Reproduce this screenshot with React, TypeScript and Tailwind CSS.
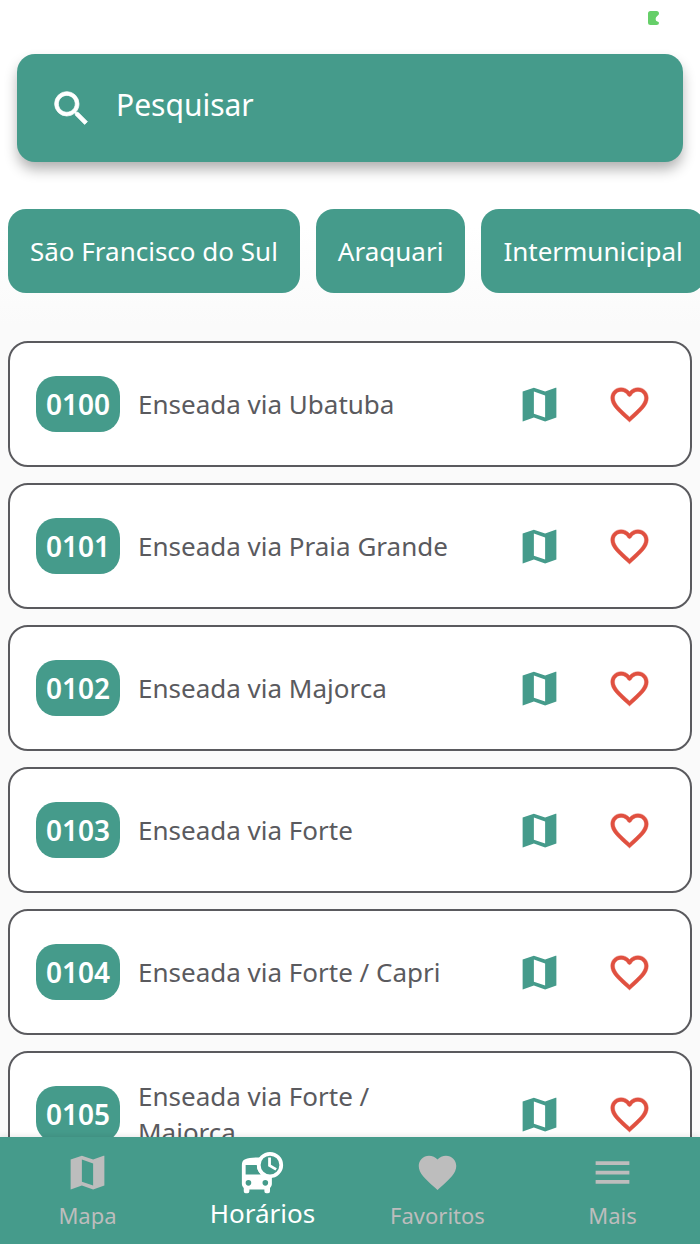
import clsx from 'clsx';
import React, { useState } from 'react';

interface IIconProps {
  className?: string;
}

interface IRoute {
  code: string;
  name: string;
}

interface ITab {
  label: string;
  Icon: React.FC<IIconProps>;
}

const MagnifyIcon: React.FC<IIconProps> = ({ className }) => (
  <svg
    viewBox="0 0 24 24"
    fill="currentColor"
    stroke="currentColor"
    strokeWidth="0.4"
    aria-hidden="true"
    className={className}
  >
    <path d="M9.5 3A6.5 6.5 0 0 1 16 9.5c0 1.61-.59 3.09-1.56 4.23l.27.27h.79l5 5-1.5 1.5-5-5v-.79l-.27-.27A6.52 6.52 0 0 1 9.5 16 6.5 6.5 0 0 1 9.5 3m0 2C7 5 5 7 5 9.5S7 14 9.5 14 14 12 14 9.5 12 5 9.5 5z" />
  </svg>
);

const MapIcon: React.FC<IIconProps> = ({ className }) => (
  <svg viewBox="0 0 24 24" fill="currentColor" aria-hidden="true" className={className}>
    <path
      fillRule="evenodd"
      d="M3 5.1 9 3l6 2.1L20.6 3.05 21 3v15.9L15 21l-6-2.1-5.6 2.05L3 21zM9 5.1v11.8l6 2.05V7.15z"
    />
  </svg>
);

const HeartOutlineIcon: React.FC<IIconProps> = ({ className }) => (
  <svg
    viewBox="0 0 24 24"
    fill="currentColor"
    stroke="currentColor"
    strokeWidth="0.2"
    aria-hidden="true"
    className={className}
  >
    <path
      fillRule="evenodd"
      d="M16.5 3c-1.74 0-3.41.81-4.5 2.08C10.91 3.81 9.24 3 7.5 3 4.42 3 2 5.41 2 8.5c0 3.77 3.4 6.86 8.55 11.53L12 21.35l1.45-1.32C18.6 15.36 22 12.27 22 8.5 22 5.41 19.58 3 16.5 3M12 18.65C7.14 14.24 4 11.39 4 8.5 4 6.5 5.5 5 7.5 5c1.54 0 3.04.9 3.6 2.3l.9.5.9-.5C13.46 5.9 14.96 5 16.5 5c2 0 3.5 1.5 3.5 3.5 0 2.89-3.14 5.74-8 10.15z"
    />
  </svg>
);

const HeartIcon: React.FC<IIconProps> = ({ className }) => (
  <svg viewBox="0 0 24 24" fill="currentColor" aria-hidden="true" className={className}>
    <path d="m12 21.35-1.45-1.32C5.4 15.36 2 12.27 2 8.5 2 5.41 4.42 3 7.5 3c1.74 0 3.41.81 4.5 2.08C13.09 3.81 14.76 3 16.5 3 19.58 3 22 5.41 22 8.5c0 3.77-3.4 6.86-8.55 11.53z" />
  </svg>
);

const BusClockIcon: React.FC<IIconProps> = ({ className }) => (
  <svg viewBox="0 0 24 24" fill="currentColor" aria-hidden="true" className={className}>
    <path
      fillRule="evenodd"
      d="M16 1a7 7 0 1 0 0 14 7 7 0 0 0 0-14m0 2a5 5 0 1 1 0 10 5 5 0 0 1 0-10"
    />
    <path d="M15 4v4.7l3.9 2.25.75-1.25-3.15-1.85V4z" />
    <path
      fillRule="evenodd"
      d="M11.1 4.5 10.6 4C4 4 1 4.5 1 8v10c0 .88.39 1.67 1 2.22V22a1 1 0 0 0 1 1h1a1 1 0 0 0 1-1v-1h8v1a1 1 0 0 0 1 1h1a1 1 0 0 0 1-1v-1.78c.61-.55 1-1.34 1-2.22v-4.08A6 6 0 0 1 11.1 4.5M3 8h6a7 7 0 0 0 2.1 5H3zM4.5 16a1.5 1.5 0 1 1 0 3 1.5 1.5 0 0 1 0-3m9 0a1.5 1.5 0 1 1 0 3 1.5 1.5 0 0 1 0-3"
    />
  </svg>
);

const MenuIcon: React.FC<IIconProps> = ({ className }) => (
  <svg viewBox="0 0 24 24" fill="currentColor" aria-hidden="true" className={className}>
    <path d="M3 6h18v2H3zm0 5h18v2H3zm0 5h18v2H3z" />
  </svg>
);

const cities: string[] = ['São Francisco do Sul', 'Araquari', 'Intermunicipal'];

const routes: IRoute[] = [
  { code: '0100', name: 'Enseada via Ubatuba' },
  { code: '0101', name: 'Enseada via Praia Grande' },
  { code: '0102', name: 'Enseada via Majorca' },
  { code: '0103', name: 'Enseada via Forte' },
  { code: '0104', name: 'Enseada via Forte / Capri' },
  { code: '0105', name: 'Enseada via Forte / Majorca' },
];

const tabs: ITab[] = [
  { label: 'Mapa', Icon: MapIcon },
  { label: 'Horários', Icon: BusClockIcon },
  { label: 'Favoritos', Icon: HeartIcon },
  { label: 'Mais', Icon: MenuIcon },
];

const RouteCard: React.FC<{ route: IRoute }> = ({ route }) => (
  <li className="flex min-h-[126px] items-center rounded-[20px] border-2 border-[#5a5a5e] bg-white pr-4 pl-[26px]">
    <span className="flex h-14 w-[84px] shrink-0 items-center justify-center rounded-[20px] bg-[#459b8b] text-[28px] font-semibold text-white">
      {route.code}
    </span>
    <span className="min-w-0 flex-1 pr-6 pl-[18px] text-[26px] leading-9 text-[#5a5a5e]">
      {route.name}
    </span>
    <button
      type="button"
      aria-label={`Mapa ${route.code}`}
      className="flex h-[90px] w-[90px] shrink-0 items-center justify-center text-[#459b8b]"
    >
      <MapIcon className="size-[45px]" />
    </button>
    <button
      type="button"
      aria-label={`Favoritar ${route.code}`}
      className="flex h-[90px] w-[90px] shrink-0 items-center justify-center text-[#e05040]"
    >
      <HeartOutlineIcon className="size-[45px]" />
    </button>
  </li>
);

const App: React.FC = () => {
  const [search, setSearch] = useState<string>('');
  const [activeTab, setActiveTab] = useState<string>('Horários');

  return (
    <div className="flex h-screen flex-col overflow-hidden bg-[#fafafa] font-['Noto_Sans',sans-serif]">
      <header className="shrink-0 bg-linear-to-b from-white from-70% to-[#fafafa]">
        <div className="flex h-[54px] justify-end pt-[11px] pr-[41px]">
          <svg viewBox="0 0 11 14" className="h-[14px] w-[11px] text-[#66cf69]" aria-hidden="true">
            <path
              fill="currentColor"
              d="M2.5 0h6Q11 0 11 2.5 11 3.7 9.5 4.8 7.6 6 7.6 8q0 2 1.8 2.5 1.6.3 1.6 1.4Q11 14 8.5 14h-6Q0 14 0 11.5v-9Q0 0 2.5 0"
            />
          </svg>
        </div>

        <label className="mx-[17px] flex h-[108px] items-center rounded-[18px] bg-[#459b8b] pl-8 text-white shadow-[0_8px_14px_-1px_rgba(0,0,0,0.32)]">
          <MagnifyIcon className="size-[45px] shrink-0" />
          <input
            type="text"
            aria-label="Pesquisar"
            placeholder="Pesquisar"
            value={search}
            onChange={(e) => setSearch(e.target.value)}
            className="min-w-0 flex-1 bg-transparent pr-4 pb-2 pl-[22px] text-[30px] text-white outline-none placeholder:text-white"
          />
        </label>

        <div className="mt-[47px] flex gap-4 overflow-hidden px-2 pb-8">
          {cities.map((city) => (
            <button
              key={city}
              type="button"
              className="h-[84px] shrink-0 rounded-[18px] bg-[#459b8b] px-[22px] text-[26px] text-white"
            >
              {city}
            </button>
          ))}
        </div>
      </header>

      <main className="min-h-0 flex-1 overflow-hidden px-2 pt-4">
        <ul className="flex flex-col gap-4">
          {routes.map((route) => (
            <RouteCard key={route.code} route={route} />
          ))}
        </ul>
      </main>

      <nav className="flex h-[107px] shrink-0 bg-[#459b8b] shadow-[0_-1px_6px_rgba(0,0,0,0.1)]">
        {tabs.map(({ label, Icon }) => (
          <button
            key={label}
            type="button"
            onClick={() => setActiveTab(label)}
            className={clsx(
              'flex flex-1 flex-col items-center pt-[13px]',
              activeTab === label
                ? 'gap-1 text-[26px] leading-7 text-white'
                : 'gap-1.5 text-[22px] leading-7 text-[#bdbdbd]',
            )}
          >
            <Icon className="size-[45px] shrink-0" />
            <span>{label}</span>
          </button>
        ))}
      </nav>
    </div>
  );
};

export default App;
